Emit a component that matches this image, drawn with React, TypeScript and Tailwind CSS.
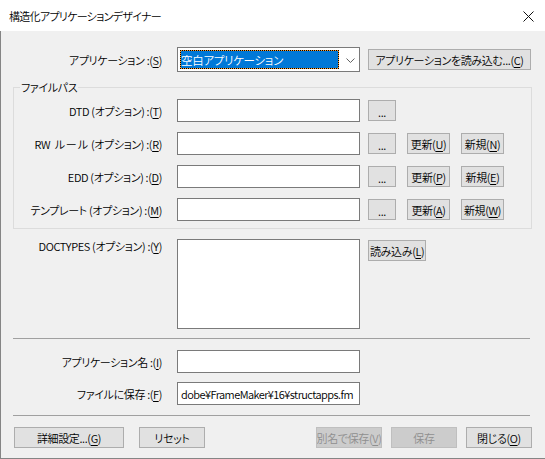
import React from "react";

const Btn = ({
  children,
  w,
  disabled,
  left,
  extra = "",
}: {
  children: React.ReactNode;
  w: string;
  disabled?: boolean;
  left?: boolean;
  extra?: string;
}) => (
  <div
    className={`${w} h-[21px] shrink-0 flex items-center ${left ? "justify-start pl-[1px]" : "justify-center"} overflow-hidden whitespace-nowrap border ${
      disabled ? "border-[#bfbfbf] bg-[#cccccc] text-[#8f8f8f]" : "border-[#adadad] bg-[#e1e1e1] text-black"
    } ${extra}`}
  >
    <span className="shrink-0 leading-[16px]">{children}</span>
  </div>
);

const Dots = () => (
  <div className="w-[28px] h-[21px] shrink-0 ml-[8px] flex items-end justify-center pb-[2px] border border-[#adadad] bg-[#e1e1e1] text-[11px] leading-[12px]">
    ...
  </div>
);

const Input = ({ children }: { children?: React.ReactNode }) => (
  <div className="w-[183px] h-[23px] shrink-0 ml-[15px] border border-[#7a7a7a] bg-white flex items-center pl-[3px] overflow-hidden whitespace-nowrap leading-[16px]">
    {children}
  </div>
);

const M = ({ c }: { c: string }) => (
  <>
    (<u className="underline underline-offset-[2px]">{c}</u>)
  </>
);

const Label = ({ w, children, extra = "" }: { w: string; children: React.ReactNode; extra?: string }) => (
  <div className={`${w} shrink-0 text-right leading-[16px] whitespace-nowrap ${extra}`}>{children}</div>
);

export default function App() {
  return (
    <div className="w-[545px] h-[459px] bg-[#f0f0f0] flex flex-col overflow-hidden text-[11px] font-[350] tracking-[-0.35px] text-black font-['Noto_Sans_CJK_JP',sans-serif] [font-feature-settings:'palt']">
      {/* title bar */}
      <div className="h-[31px] shrink-0 bg-white flex items-center justify-between pl-[9px] pr-[11px]">
        <span className="leading-[16px] tracking-[-0.7px]">構造化アプリケーションデザイナー</span>
        <svg width="11" height="11" viewBox="0 0 11 11" className="mt-[1px]">
          <path d="M0.5 0.5 L10.5 10.5 M10.5 0.5 L0.5 10.5" stroke="#111" strokeWidth="1" fill="none" />
        </svg>
      </div>

      {/* body */}
      <div className="flex-1 flex flex-col border-l border-b border-[#858585]">
        {/* application row */}
        <div className="mt-[16px] h-[25px] flex items-center">
          <Label w="w-[161px]">
            アプリケーション :<M c="S" />
          </Label>
          <div className="w-[183px] h-[25px] shrink-0 ml-[15px] border border-[#7a7a7a] bg-white flex items-center pl-[2px] pr-[4px]">
            <div className="w-[160px] h-[19px] bg-[#ff9c2a]">
              <div className="w-full h-full border border-dotted border-black bg-[#0078d7] bg-clip-padding text-white text-[11.5px] tracking-[-0.3px] flex items-center leading-[16px] whitespace-nowrap">
                空白アプリケーション
              </div>
            </div>
            <svg width="9" height="5" viewBox="0 0 9 5" className="ml-[7px] mt-[1px]">
              <path d="M0.5 0.5 L4.5 4.5 L8.5 0.5" stroke="#606060" strokeWidth="1" fill="none" />
            </svg>
          </div>
          <Btn w="w-[163px]" extra="ml-[8px]">
            アプリケーションを読み込む...<M c="C" />
          </Btn>
        </div>

        {/* file path group */}
        <div className="mt-[15px] ml-[12px] w-[519px] relative border border-[#dcdcdc] pt-[11px] pb-[7px] flex flex-col gap-[10px]">
          <span className="absolute left-[6px] top-[-9px] px-[1px] bg-[#f0f0f0] leading-[16px]">ファイルパス</span>

          <div className="h-[23px] flex items-center">
            <Label w="w-[148px]">
              DTD (オプション) :<M c="T" />
            </Label>
            <Input />
            <Dots />
          </div>

          <div className="h-[23px] flex items-center">
            <Label w="w-[148px]">
              RW<span className="ml-[4px] tracking-[0.5px] [font-feature-settings:normal]">ルール</span> (オプション) :<M c="R" />
            </Label>
            <Input />
            <Dots />
            <Btn w="w-[43px]" extra="ml-[11px]">
              更新<M c="U" />
            </Btn>
            <Btn w="w-[43px]" extra="ml-[11px]">
              新規<M c="N" />
            </Btn>
          </div>

          <div className="h-[23px] flex items-center">
            <Label w="w-[148px]">
              EDD (オプション) :<M c="D" />
            </Label>
            <Input />
            <Dots />
            <Btn w="w-[43px]" extra="ml-[11px]">
              更新<M c="P" />
            </Btn>
            <Btn w="w-[43px]" extra="ml-[11px]">
              新規<M c="E" />
            </Btn>
          </div>

          <div className="h-[23px] flex items-center">
            <Label w="w-[148px]">
              テンプレート (オプション) :<M c="M" />
            </Label>
            <Input />
            <Dots />
            <Btn w="w-[43px]" extra="ml-[11px]">
              更新<M c="A" />
            </Btn>
            <Btn w="w-[43px]" extra="ml-[11px]">
              新規<M c="W" />
            </Btn>
          </div>
        </div>

        {/* doctypes */}
        <div className="mt-[10px] flex items-start">
          <Label w="w-[161px]" extra="mt-[-1px]">
            DOCTYPES (オプション) :<M c="Y" />
          </Label>
          <div className="w-[183px] h-[90px] shrink-0 ml-[15px] border border-[#7a7a7a] bg-white" />
          <Btn w="w-[58px]" left extra="ml-[8px] mt-[1px]">
            読み込み<M c="L" />
          </Btn>
        </div>

        <div className="mt-[9px] ml-[12px] w-[517px] h-px bg-[#a0a0a0]" />

        <div className="mt-[11px] h-[23px] flex items-center">
          <Label w="w-[161px]">
            アプリケーション名 :<M c="I" />
          </Label>
          <Input />
        </div>

        <div className="mt-[9px] h-[23px] flex items-center">
          <Label w="w-[161px]">
            ファイルに保存 :<M c="F" />
          </Label>
          <Input>
            <span className="tracking-[-0.55px]">dobe¥FrameMaker¥16¥structapps.fm</span>
          </Input>
        </div>

        <div className="mt-[10px] ml-[12px] w-[517px] h-px bg-[#a0a0a0]" />

        <div className="mt-[11px] flex items-center">
          <Btn w="w-[110px]" extra="ml-[13px]">
            詳細設定...<M c="G" />
          </Btn>
          <Btn w="w-[66px]" extra="ml-[15px]">
            リセット
          </Btn>
          <Btn w="w-[66px]" disabled extra="ml-[111px]">
            別名で保存<M c="V" />
          </Btn>
          <Btn w="w-[66px]" disabled extra="ml-[9px]">
            保存
          </Btn>
          <Btn w="w-[66px]" extra="ml-[9px]">
            閉じる<M c="O" />
          </Btn>
        </div>
      </div>
    </div>
  );
}
